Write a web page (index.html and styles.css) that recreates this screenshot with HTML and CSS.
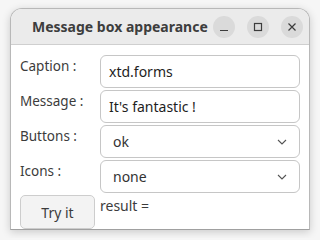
FILE: index.html
```html
<!DOCTYPE html>
<html lang="en">

<head>
    <meta charset="UTF-8">
    <title>Message box appearance</title>
    <link rel="stylesheet" href="styles.css">
</head>

<body>
    <div class="window">
        <div class="titlebar">
            <span class="title">Message box appearance</span>
            <div class="title-buttons">
                <button class="wbtn">
                    <svg width="10" height="10" viewBox="0 0 10 10"><path d="M1 8.5h8" stroke="#3c3c3c" stroke-width="1.2"/></svg>
                </button>
                <button class="wbtn">
                    <svg width="10" height="10" viewBox="0 0 10 10"><rect x="1.5" y="1.5" width="7" height="7" fill="none" stroke="#3c3c3c" stroke-width="1.2"/></svg>
                </button>
                <button class="wbtn">
                    <svg width="10" height="10" viewBox="0 0 10 10"><path d="M1.5 1.5l7 7M8.5 1.5l-7 7" stroke="#3c3c3c" stroke-width="1.2"/></svg>
                </button>
            </div>
        </div>

        <div class="form">
            <label class="label">Caption :</label>
            <div class="field">xtd.forms</div>

            <label class="label">Message :</label>
            <div class="field">It's fantastic !</div>

            <label class="label">Buttons :</label>
            <div class="field combo">
                <span>ok</span>
                <svg width="10" height="6" viewBox="0 0 10 6"><path d="M1 1l4 4 4-4" fill="none" stroke="#555" stroke-width="1.1"/></svg>
            </div>

            <label class="label">Icons :</label>
            <div class="field combo">
                <span>none</span>
                <svg width="10" height="6" viewBox="0 0 10 6"><path d="M1 1l4 4 4-4" fill="none" stroke="#555" stroke-width="1.1"/></svg>
            </div>

            <button class="try-button">Try it</button>
            <div class="result">result =</div>
        </div>
    </div>
</body>

</html>
```

FILE: styles.css
```css
body {
    margin: 0;
    background-color: #f6f6f6;
    font-family: 'Noto Sans', sans-serif;
}

.window {
    margin: 8px 10px;
    width: 300px;
    height: 222px;
    box-sizing: border-box;
    background-color: #ffffff;
    border: 1px solid #b8b8b8;
    border-bottom-color: #a0a0a0;
    border-radius: 12px 12px 0 0;
    box-shadow: 0 2px 8px rgba(0, 0, 0, 0.18);
    overflow: hidden;
}

.titlebar {
    height: 36px;
    box-sizing: border-box;
    background-color: #ebebeb;
    border-bottom: 1px solid #cfcfcf;
    display: flex;
    align-items: center;
    padding-left: 21px;
    padding-right: 6px;
}

.title {
    font-size: 14px;
    font-weight: bold;
    color: #3d3d3d;
    flex: 1;
}

.title-buttons {
    display: flex;
    gap: 12px;
}

.wbtn {
    width: 22px;
    height: 22px;
    border: none;
    border-radius: 50%;
    background-color: #dadada;
    padding: 0;
    display: flex;
    align-items: center;
    justify-content: center;
}

.form {
    display: grid;
    grid-template-columns: 80px 200px;
    grid-auto-rows: 33px;
    row-gap: 2px;
    padding: 10px 0 0 9px;
}

.label {
    font-size: 13.5px;
    color: #3c3c3c;
    padding-top: 2px;
}

.field {
    box-sizing: border-box;
    border: 1px solid #c6c6c6;
    border-radius: 6px;
    font-size: 14px;
    color: #1e1e1e;
    padding: 0 8px;
    display: flex;
    align-items: center;
}

.combo {
    justify-content: space-between;
    padding: 0 12px;
    color: #333333;
}

.try-button {
    box-sizing: border-box;
    width: 75px;
    height: 34px;
    background-color: #f3f3f3;
    border: 1px solid #cdcdcd;
    border-radius: 5px;
    font-family: 'Noto Sans', sans-serif;
    font-size: 14px;
    color: #3c3c3c;
}

.result {
    font-size: 14px;
    color: #3c3c3c;
    padding-top: 1px;
}
```
